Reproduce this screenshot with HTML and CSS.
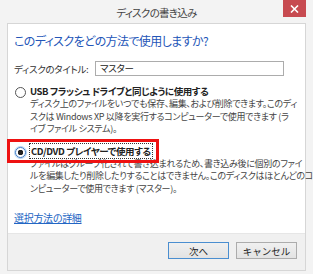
FILE: index.html
```html
<!DOCTYPE html>
<html lang="ja">
<head>
  <meta charset="UTF-8">
  <title>ディスクの書き込み</title>
  <link rel="stylesheet" href="styles.css">
</head>
<body>

  <div class="window">
    <div class="titlebar">
      <span class="title">ディスクの書き込み</span>
      <span class="close">
        <svg width="9" height="8" viewBox="0 0 9 8"><path d="M1 0.5 L8 7.5 M8 0.5 L1 7.5" stroke="#fff" stroke-width="1.6"/></svg>
      </span>
    </div>

    <div class="frame">
      <div class="content">
        <h1>このディスクをどの方法で使用しますか?</h1>

        <div class="field">
          <span class="label">ディスクのタイトル:</span>
          <div class="input">マスター</div>
        </div>

        <div class="option">
          <span class="radio"></span>
          <div>
            <div class="opt-title">USB フラッシュ ドライブと同じように使用する</div>
            <p class="desc">ディスク上のファイルをいつでも保存、編集、および削除できます。このディ<br>スクは Windows XP 以降を実行するコンピューターで使用できます (ラ<br>イブ ファイル システム)。</p>
          </div>
        </div>

        <div class="option selected">
          <span class="radio"></span>
          <div>
            <div class="opt-title"><span class="focus">CD/DVD プレイヤーで使用する</span></div>
            <p class="desc">ファイルはグループ化されて書き込まれるため、書き込み後に個別のファイ<br>ルを編集したり削除したりすることはできません。このディスクはほとんどのコ<br>ンピューターで使用できます (マスター)。</p>
          </div>
          <div class="highlight"></div>
        </div>

        <a href="#" class="more">選択方法の詳細</a>
      </div>

      <div class="footer">
        <button class="default">次へ</button>
        <button>キャンセル</button>
      </div>
    </div>
  </div>

</body>
</html>
```

FILE: styles.css
```css
body {
  margin: 0;
  padding: 0;
  font-family: "Noto Sans CJK JP", "Noto Sans", sans-serif;
  font-feature-settings: "palt";
  color: #333;
}

.window {
  width: 313px;
  height: 274px;
  background-color: #f3f3f3;
  display: flex;
  flex-direction: column;
}

.titlebar {
  height: 23px;
  position: relative;
  display: flex;
  justify-content: center;
  align-items: flex-start;
}

.title {
  font-size: 10.5px;
  letter-spacing: -0.7px;
  line-height: 26px;
  color: #444;
}

.close {
  position: absolute;
  top: 0;
  right: 7px;
  width: 23px;
  height: 17px;
  background-color: #c74a50;
  display: flex;
  justify-content: center;
  align-items: center;
}

.frame {
  margin: 0 7px;
  border: 1px solid #d6d6d6;
  height: 246px;
  display: flex;
  flex-direction: column;
}

.content {
  background-color: #fff;
  height: 209px;
  padding: 0 6px;
}

h1 {
  margin: 9px 0 0;
  font-size: 12px;
  letter-spacing: -0.6px;
  font-weight: normal;
  line-height: 16px;
  color: #2456b8;
}

.field {
  display: flex;
  align-items: center;
  margin-top: 12px;
  font-size: 9.5px;
  letter-spacing: -0.3px;
}

.label {
  width: 81px;
}

.input {
  width: 183px;
  height: 13px;
  border: 1px solid #acacac;
  padding-left: 4px;
  line-height: 13px;
  color: #222;
}

.option {
  display: flex;
  align-items: flex-start;
  position: relative;
  margin-top: 8px;
}

.radio {
  width: 9px;
  height: 9px;
  border: 1px solid #555;
  border-radius: 50%;
  margin: 3px 4px 0 1px;
  flex-shrink: 0;
}

.selected .radio {
  border-color: #3d7bc7;
  box-shadow: 0 0 0 1px #b7d4f0;
  background: radial-gradient(circle, #222 0 2.5px, #fff 3px);
}

.opt-title {
  font-size: 9.5px;
  letter-spacing: -0.4px;
  font-weight: bold;
  line-height: 14px;
  color: #222;
}

.focus {
  outline: 1px dotted #333;
  padding: 0 1px;
}

.desc {
  margin: 0;
  font-size: 9px;
  letter-spacing: -0.3px;
  line-height: 12.5px;
  white-space: nowrap;
  color: #444;
}

.highlight {
  position: absolute;
  left: -7px;
  top: -5px;
  width: 146px;
  height: 18px;
  border: 3px solid #ee1111;
}

.more {
  display: block;
  margin-top: 15px;
  font-size: 10px;
  letter-spacing: -0.3px;
  color: #2366c4;
}

.footer {
  flex: 1;
  background-color: #f0f0f0;
  border-top: 1px solid #e6e6e6;
  display: flex;
  justify-content: flex-end;
  align-items: flex-start;
  gap: 7px;
  padding: 8px 8px 0 0;
}

.footer button {
  width: 61px;
  height: 17px;
  padding: 0;
  font-family: inherit;
  font-size: 9.5px;
  color: #222;
  background: linear-gradient(#f0f0f0, #e3e3e3);
  border: 1px solid #acacac;
}

.footer button.default {
  border-color: #4a8ed0;
}
```
